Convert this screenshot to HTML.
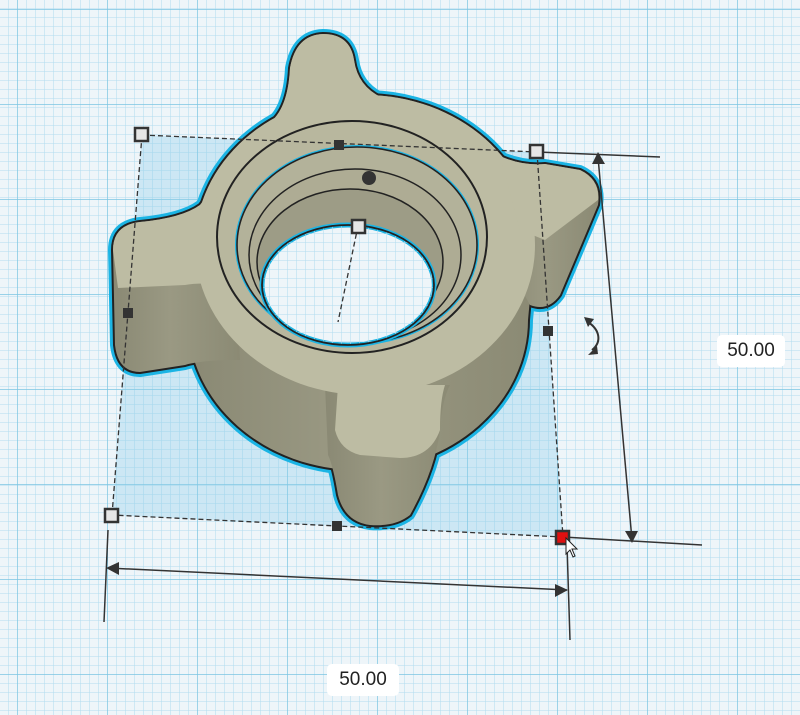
<!DOCTYPE html>
<html><head><meta charset="utf-8"><style>
html,body{margin:0;padding:0;width:800px;height:715px;overflow:hidden;background:#eef5f9;}
.lbl{position:absolute;background:#fff;border-radius:5px;font-family:"Liberation Sans",sans-serif;font-size:19px;color:#222;text-align:center;line-height:32px;height:32px;}
</style></head><body>
<svg width="800" height="715" viewBox="0 0 800 715" xmlns="http://www.w3.org/2000/svg" style="position:absolute;left:0;top:0">
<defs>
<pattern id="minor" width="9" height="9" patternUnits="userSpaceOnUse">
<path d="M9 0V9M0 9H9" stroke="#b2dcee" stroke-width="1.1" fill="none"/>
</pattern>
<pattern id="major" x="18" y="10" width="90" height="95" patternUnits="userSpaceOnUse">
<path d="M90 0V95M0 95H90" stroke="#7cc5e2" stroke-width="1.4" fill="none"/>
</pattern>
<linearGradient id="side" x1="0" y1="0" x2="1" y2="0">
<stop offset="0" stop-color="#8a8974"/><stop offset="0.45" stop-color="#9a9983"/><stop offset="1" stop-color="#8b8a74"/>
</linearGradient>
<g id="sil">
<path d="M195,245 A170,150 0 0 1 535,245 L528,320 A170,150 0 0 1 188,320 Z"/>
<path d="M268,124 Q288,110 290,68 Q296,35 323,34 Q350,34 354,60 Q358,88 385,99 L360,140 L290,140 Z"/>
<path d="M113,250 Q113,225 140,222 Q182,218 200,205 L207,196 L232,200 L240,360 Q200,360 185,365 L140,372 Q118,372 115,345 Z"/>
<path d="M500,156 Q522,166 545,164 L580,170 Q602,180 598,205 L560,295 Q548,312 530,305 L500,250 Z"/>
<path d="M325,385 L450,385 Q442,400 440,430 Q435,470 410,515 Q395,527 370,525 Q345,522 338,495 Q333,465 328,455 Z"/>
</g>
</defs>
<rect width="800" height="715" fill="#eef5f9"/>
<rect width="800" height="715" fill="url(#minor)"/>
<rect width="800" height="715" fill="url(#major)"/>
<polygon points="142,135 537,152 563,537 112,515" fill="rgba(140,205,235,0.35)"/>
<use href="#sil" fill="#1bb4e4" stroke="#1bb4e4" stroke-width="10" stroke-linejoin="round"/>
<use href="#sil" fill="#222" stroke="#222" stroke-width="4" stroke-linejoin="round"/>
<use href="#sil" fill="url(#side)"/>
<g fill="#bdbca3">
<ellipse cx="365" cy="245" rx="170" ry="150"/>
<path d="M268,124 Q288,110 290,68 Q296,35 323,34 Q350,34 354,60 Q358,88 385,99 L360,140 L290,140 Z"/>
<path d="M113,250 Q113,225 140,222 Q182,218 200,205 L207,196 L232,200 L232,285 Q200,282 185,285 L118,288 Z"/>
<path d="M500,156 Q522,166 545,164 L580,170 Q600,180 598,200 L545,240 L520,230 Z"/>
<path d="M338,385 L445,385 Q440,400 440,430 Q430,458 400,458 L360,455 Q340,450 335,430 Z"/>
</g>
<ellipse cx="352" cy="237" rx="135" ry="116" fill="#b8b79e" stroke="#222" stroke-width="2"/>
<ellipse cx="357" cy="245" rx="120" ry="98" fill="none" stroke="#1bb4e4" stroke-width="4"/>
<ellipse cx="357" cy="245" rx="120" ry="98" fill="#b3b29a" stroke="#222" stroke-width="1.6"/>
<ellipse cx="355" cy="255" rx="106" ry="86" fill="#aeac94" stroke="#222" stroke-width="1.5"/>
<ellipse cx="350" cy="262" rx="93" ry="73" fill="#9d9c86" stroke="#222" stroke-width="1.5"/>
<ellipse cx="348" cy="285" rx="86" ry="60" fill="#eef5f9" stroke="#1bb4e4" stroke-width="5"/>
<ellipse cx="348" cy="285" rx="86" ry="60" fill="url(#minor)"/>
<ellipse cx="348" cy="285" rx="86" ry="60" fill="none" stroke="#222" stroke-width="1.8"/>
<g stroke="#333" stroke-width="1.3" stroke-dasharray="5,3" fill="none">
<path d="M142,135 L537,152"/><path d="M537,152 L563,537"/><path d="M563,537 L112,515"/><path d="M112,515 L142,135"/>
<path d="M358,226 L338,322"/>
</g>
<g stroke="#333" stroke-width="1.5" fill="none">
<path d="M537,152 L660,157"/><path d="M563,537 L702,545"/>
<path d="M598,157 L632,540"/>
<path d="M108,530 L104,622"/><path d="M567,545 L570,640"/>
<path d="M108,568 L567,590"/>
</g>
<polygon points="598,152 592,164 605,164" fill="#333"/>
<polygon points="632,543 625,531 638,531" fill="#333"/>
<polygon points="106,568 119,562 119,575" fill="#333"/>
<polygon points="568,590 555,584 555,597" fill="#333"/>
<path d="M588,322 C600,330 602,342 592,350" fill="none" stroke="#333" stroke-width="2"/>
<polygon points="584,317 594,319 588,327" fill="#333"/>
<polygon points="588,355 597,346 598,354" fill="#333"/>
<g stroke="#333" stroke-width="2.5" fill="#e6e6e6">
<rect x="135" y="128" width="13" height="13"/>
<rect x="530" y="145" width="13" height="13"/>
<rect x="105" y="509" width="13" height="13"/>
<rect x="352" y="220" width="13" height="13"/>
</g>
<rect x="556" y="531" width="13" height="13" fill="#e01010" stroke="#333" stroke-width="2.5"/>
<g fill="#333">
<rect x="334" y="140" width="10" height="10"/>
<rect x="123" y="308" width="10" height="10"/>
<rect x="543" y="326" width="10" height="10"/>
<rect x="332" y="521" width="10" height="10"/>
<circle cx="369" cy="178" r="7"/>
</g>
<path d="M566,538 L566,554 L570,550 L573,557 L575,556 L572,549 L577,549 Z" fill="#fff" stroke="#222" stroke-width="1"/>
</svg>
<div class="lbl" style="left:717px;top:335px;width:68px;">50.00</div>
<div class="lbl" style="left:327px;top:664px;width:72px;">50.00</div>
</body></html>
